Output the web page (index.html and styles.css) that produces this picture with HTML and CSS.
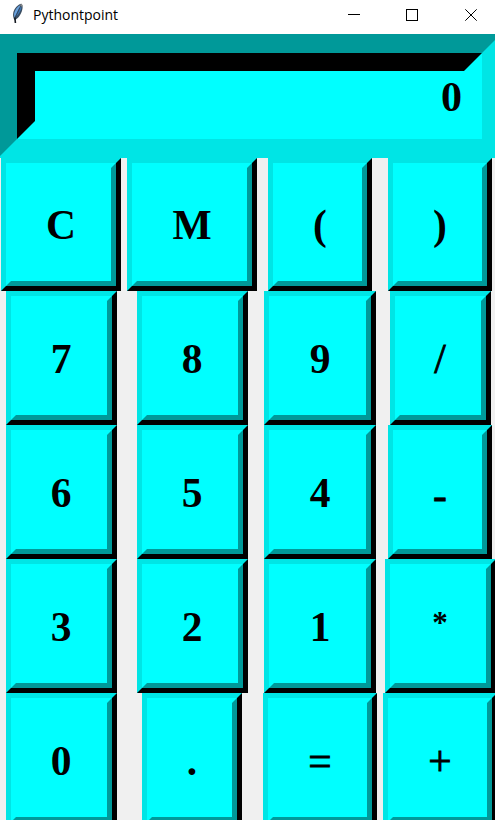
FILE: index.html
```html
<!DOCTYPE html>
<html lang="en">
<head>
<meta charset="utf-8">
<title>Pythontpoint</title>
<link rel="stylesheet" href="styles.css">
</head>
<body>
<div class="window">
  <header class="titlebar">
    <svg class="feather" width="14" height="22" viewBox="0 0 14 22">
      <path d="M10.4 .8C7 1.2 3.2 5.5 2.3 9.5C1.7 12.3 2.2 15 3.5 17C7.2 15.8 10 11.5 11.2 7C11.9 4.3 11.8 1.7 10.4.8Z" fill="#3a4c60"/>
      <path d="M9.4 2.2C6.3 3.4 3.9 7 3.2 10.4C2.9 12 3.2 13.5 3.7 14.6L7.2 7.2Z" fill="#6ba3de"/>
      <path d="M10 3.2L5.2 13.5C7.6 11.6 9.8 8 10.5 4.8Z" fill="#3d76b4"/>
      <path d="M9.6 1.4L11.2 3.1" stroke="#8b8b8b" stroke-width="1.6"/>
      <path d="M8.6 5L3.9 14.6" fill="none" stroke="#2a4263" stroke-width=".7"/>
      <path d="M3.9 14.6L4.4 20" fill="none" stroke="#151a22" stroke-width="1.6"/>
    </svg>
    <span class="title">Pythontpoint</span>
    <svg class="controls" width="131" height="14" viewBox="0 0 131 14" fill="none" stroke="#000" stroke-width="1">
      <path d="M0 6.5H12" shape-rendering="crispEdges"/>
      <rect x="58.5" y="1.5" width="11" height="11" shape-rendering="crispEdges"/>
      <path d="M117.3 1.3L128.7 12.7M128.7 1.3L117.3 12.7"/>
    </svg>
  </header>
  <div class="display"><div class="screen"><span>0</span></div></div>
  <main class="keys">
    <button class="key top c"><span>C</span></button>
    <button class="key top m"><span>M</span></button>
    <button class="key top paren"><span>(</span></button>
    <button class="key top paren"><span>)</span></button>
    <button class="key"><span>7</span></button>
    <button class="key"><span>8</span></button>
    <button class="key wide"><span>9</span></button>
    <button class="key thin slash"><span>/</span></button>
    <button class="key"><span>6</span></button>
    <button class="key"><span>5</span></button>
    <button class="key wide"><span>4</span></button>
    <button class="key thin minus paren"><span>-</span></button>
    <button class="key"><span>3</span></button>
    <button class="key"><span>2</span></button>
    <button class="key wide"><span>1</span></button>
    <button class="key star"><span>*</span></button>
    <button class="key"><span>0</span></button>
    <button class="key dot"><span>.</span></button>
    <button class="key thin sign"><span>=</span></button>
    <button class="key thin sign"><span>+</span></button>
  </main>
</div>
</body>
</html>
```
FILE: styles.css
```css
* { box-sizing: border-box; }
html, body { margin: 0; height: 100%; overflow: hidden; }
.window {
  width: 495px;
  height: 820px;
  overflow: hidden;
  background: #f0f0f0;
  font-family: "Liberation Serif", "Times New Roman", serif;
  color: #000;
}
.titlebar {
  height: 34px;
  background: #fff;
  display: flex;
  align-items: flex-start;
}
.feather { margin: 3px 0 0 11px; }
.title {
  margin: 5px 0 0 8px;
  width: 90px;
  font: 14px/20px "Open Sans", "Noto Sans", sans-serif;
  white-space: nowrap;
}
.controls { margin: 8px 0 0 225px; }
.display {
  margin-left: -2px;
  width: 503px;
  height: 124px;
  border: 19px solid;
  border-color: #009999 #00e5e5 #00e5e5 #009999;
}
.screen {
  height: 100%;
  background: #0ff;
  border: 18px solid;
  border-color: #000 #0ff #0ff #000;
  text-align: right;
  font-size: 42px;
  font-weight: bold;
  line-height: 52px;
  padding-right: 2px;
}
.keys {
  display: grid;
  width: 502px;
  grid-template-columns: 122px 140px 116px 124px;
  grid-template-rows: 133px repeat(4, 134px);
}
.key {
  justify-self: center;
  width: 111px;
  height: 100%;
  padding: 0;
  border: 5px solid;
  border-radius: 0;
  border-color: #00e5e5 #000 #000 #00e5e5;
  background: #0ff;
  color: #000;
  font: bold 41.5px/46px "Liberation Serif", "Times New Roman", serif;
}
.key span {
  display: flex;
  align-items: center;
  justify-content: center;
  height: 100%;
  padding-top: 2px;
  border: 5px solid;
  border-color: #0ff #009999 #009999 #0ff;
}
.key.top span { padding-top: 0; }
.key.thin { font-weight: normal; -webkit-text-stroke: 0.8px #000; }
.key.star { font-size: 31px; }
.key.minus span { padding-top: 6px; }
.key.star span { padding: 0 0 6px; }
.c { width: 120px; }
.m { width: 130px; }
.paren { width: 104px; }
.wide { width: 112px; }
.slash { width: 101px; }
.dot { width: 100px; }
.sign { width: 114px; }
```
